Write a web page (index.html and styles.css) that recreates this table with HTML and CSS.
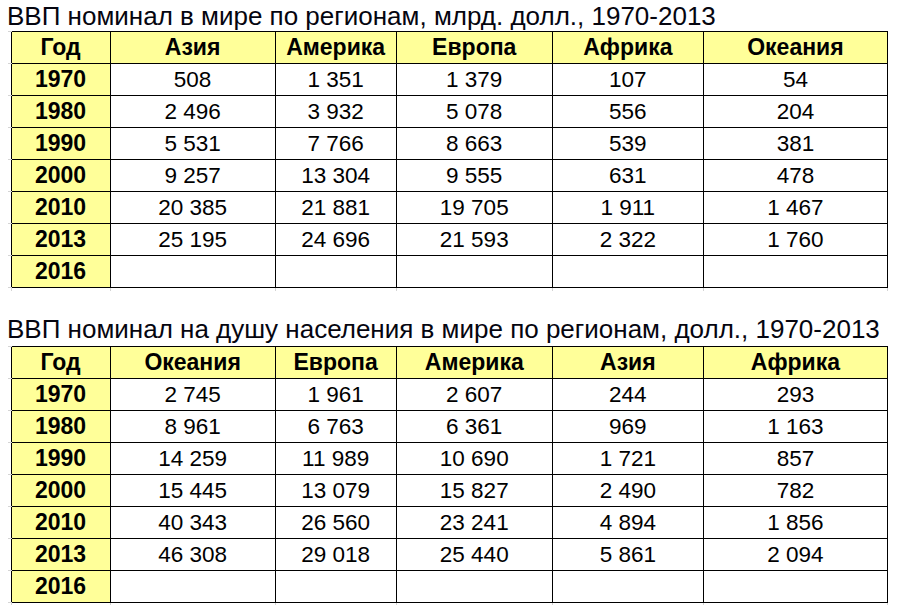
FILE: index.html
```html
<!DOCTYPE html>
<html lang="ru">
<head>
<meta charset="utf-8">
<title>ВВП номинал</title>
<link rel="stylesheet" href="styles.css">
</head>
<body>
<div class="page">
  <section class="block">
    <h2 class="title">ВВП номинал в мире по регионам, млрд. долл., 1970-2013</h2>
    <table class="grid">
      <colgroup><col class="cg"><col class="c0"><col class="c1"><col class="c2"><col class="c3"><col class="c4"><col class="c5"></colgroup>
      <tr class="head"><td class="gut first"></td><th>Год</th><th>Азия</th><th>Америка</th><th>Европа</th><th>Африка</th><th>Океания</th></tr>
      <tr><td class="gut"></td><th>1970</th><td>508</td><td>1 351</td><td>1 379</td><td>107</td><td>54</td></tr>
      <tr><td class="gut"></td><th>1980</th><td>2 496</td><td>3 932</td><td>5 078</td><td>556</td><td>204</td></tr>
      <tr><td class="gut"></td><th>1990</th><td>5 531</td><td>7 766</td><td>8 663</td><td>539</td><td>381</td></tr>
      <tr><td class="gut"></td><th>2000</th><td>9 257</td><td>13 304</td><td>9 555</td><td>631</td><td>478</td></tr>
      <tr><td class="gut"></td><th>2010</th><td>20 385</td><td>21 881</td><td>19 705</td><td>1 911</td><td>1 467</td></tr>
      <tr><td class="gut"></td><th>2013</th><td>25 195</td><td>24 696</td><td>21 593</td><td>2 322</td><td>1 760</td></tr>
      <tr><td class="gut"></td><th>2016</th><td></td><td></td><td></td><td></td><td></td></tr>
      <tr class="ticks"><td></td><td></td><td></td><td></td><td></td><td></td><td></td></tr>
    </table>
  </section>
  <section class="block second">
    <h2 class="title">ВВП номинал на душу населения в мире по регионам, долл., 1970-2013</h2>
    <table class="grid">
      <colgroup><col class="cg"><col class="c0"><col class="c1"><col class="c2"><col class="c3"><col class="c4"><col class="c5"></colgroup>
      <tr class="head"><td class="gut first"></td><th>Год</th><th>Океания</th><th>Европа</th><th>Америка</th><th>Азия</th><th>Африка</th></tr>
      <tr><td class="gut"></td><th>1970</th><td>2 745</td><td>1 961</td><td>2 607</td><td>244</td><td>293</td></tr>
      <tr><td class="gut"></td><th>1980</th><td>8 961</td><td>6 763</td><td>6 361</td><td>969</td><td>1 163</td></tr>
      <tr><td class="gut"></td><th>1990</th><td>14 259</td><td>11 989</td><td>10 690</td><td>1 721</td><td>857</td></tr>
      <tr><td class="gut"></td><th>2000</th><td>15 445</td><td>13 079</td><td>15 827</td><td>2 490</td><td>782</td></tr>
      <tr><td class="gut"></td><th>2010</th><td>40 343</td><td>26 560</td><td>23 241</td><td>4 894</td><td>1 856</td></tr>
      <tr><td class="gut"></td><th>2013</th><td>46 308</td><td>29 018</td><td>25 440</td><td>5 861</td><td>2 094</td></tr>
      <tr><td class="gut"></td><th>2016</th><td></td><td></td><td></td><td></td><td></td></tr>
      <tr class="ticks"><td></td><td></td><td></td><td></td><td></td><td></td><td></td></tr>
    </table>
  </section>
</div>
</body>
</html>
```
FILE: styles.css
```css
html, body {
  margin: 0;
  padding: 0;
  background: #ffffff;
}
.page {
  padding: 0 0 0 8px;
  font-family: "Liberation Sans", Arial, sans-serif;
  color: #000;
}
.block {
  display: flex;
  flex-direction: column;
}
.second {
  margin-top: 24px;
}
.title {
  margin: 0 0 0 -1px;
  padding-top: 2px;
  box-sizing: border-box;
  font-weight: normal;
  font-size: 26px;
  line-height: 29px;
  height: 31px;
  white-space: nowrap;
  color: #05050f;
}
.second .title {
  padding-top: 0;
}
.grid {
  border-collapse: collapse;
  table-layout: fixed;
  width: 880px;
  font-size: 22.5px;
}
.cg { width: 3px; }
.c0 { width: 99px; }
.c1 { width: 165px; }
.c2 { width: 121px; }
.c3 { width: 156px; }
.c4 { width: 151px; }
.c5 { width: 184px; }
.grid th, .grid td {
  border: 1px solid #000;
  height: 31px;
  padding: 0;
  text-align: center;
  vertical-align: middle;
  line-height: 31px;
  box-sizing: border-box;
}
.grid th {
  background: #ffff99;
  font-weight: bold;
  font-size: 23px;
}
.grid td {
  font-weight: normal;
  background: #fff;
}
.grid td.gut {
  border-top: none;
  border-left: none;
  border-right: none;
  border-bottom: 1px solid #d4d4d4;
}
.grid td.gut.first {
  border-top: 1px solid #d4d4d4;
}
.grid .ticks td {
  height: 3px;
  line-height: 3px;
  border-top: none;
  border-bottom: none;
  border-left: 1px solid #d4d4d4;
  border-right: 1px solid #d4d4d4;
}
.grid .ticks td:first-child {
  border-left: none;
  border-right: none;
}
```
